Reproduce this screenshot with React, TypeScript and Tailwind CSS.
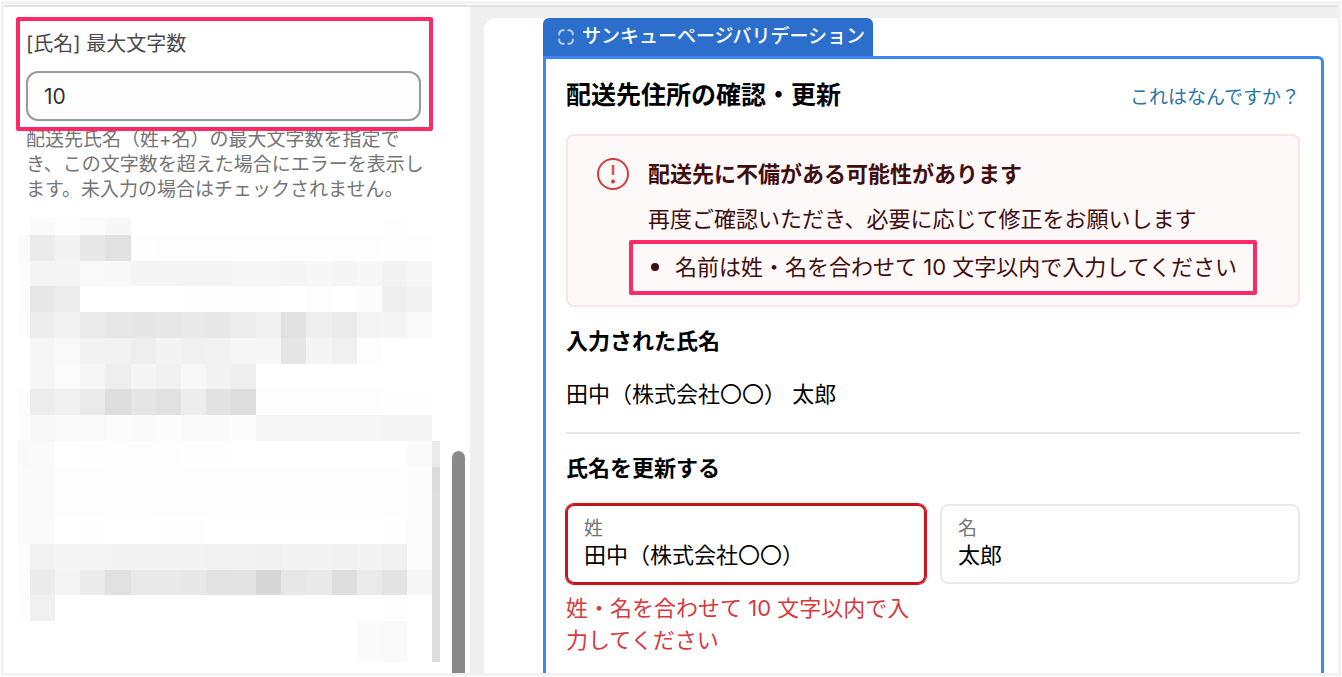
import { useId } from "react";

const MOSAIC: number[][] = [
  [255, 250, 253, 251, 247, 255, 255, 255, 255, 255, 255, 255, 255, 255, 255, 254, 255, 255],
  [251, 235, 243, 232, 225, 254, 253, 253, 253, 253, 253, 253, 253, 253, 253, 254, 254, 255],
  [252, 244, 244, 249, 248, 245, 245, 245, 245, 246, 246, 245, 247, 245, 247, 243, 247, 255],
  [252, 232, 236, 255, 255, 255, 255, 254, 254, 254, 253, 255, 253, 255, 252, 239, 243, 255],
  [253, 237, 242, 234, 231, 230, 231, 233, 232, 236, 240, 225, 238, 234, 244, 245, 249, 255],
  [255, 246, 249, 243, 242, 238, 243, 241, 242, 246, 247, 230, 245, 240, 253, 255, 255, 255],
  [255, 246, 251, 246, 238, 245, 241, 248, 242, 239, 255, 255, 255, 255, 255, 255, 255, 255],
  [253, 237, 241, 234, 221, 230, 225, 237, 226, 221, 253, 253, 253, 253, 253, 254, 254, 255],
  [252, 248, 249, 249, 251, 250, 252, 250, 250, 252, 246, 246, 246, 246, 246, 245, 245, 255],
  [249, 250, 255, 254, 253, 253, 253, 254, 254, 255, 255, 255, 255, 255, 255, 255, 249, 234],
  [250, 250, 254, 253, 253, 253, 253, 253, 253, 253, 253, 253, 253, 253, 253, 253, 252, 219],
  [250, 250, 254, 253, 253, 253, 253, 253, 253, 253, 253, 253, 253, 253, 253, 253, 252, 222],
  [250, 250, 255, 254, 255, 255, 254, 254, 255, 255, 255, 255, 255, 255, 255, 254, 252, 222],
  [253, 242, 245, 244, 243, 243, 243, 243, 242, 243, 240, 243, 243, 241, 243, 240, 252, 222],
  [253, 235, 244, 235, 225, 233, 233, 232, 227, 227, 215, 231, 233, 222, 234, 228, 247, 222],
  [252, 240, 255, 255, 255, 255, 255, 255, 255, 255, 255, 255, 255, 255, 255, 254, 255, 222],
  [255, 255, 255, 255, 255, 255, 255, 255, 255, 255, 255, 255, 255, 255, 250, 249, 255, 222],
];

function Mosaic() {
  return (
    <div
      aria-hidden="true"
      className="mt-4 mr-[30px] ml-3.5 grid h-[444px] grid-cols-[12px_repeat(16,1fr)_8px] grid-rows-[17px_repeat(15,1fr)_41px]"
    >
      {MOSAIC.flatMap((row, y) =>
        row.map((v, x) => (
          <div key={`${y}-${x}`} style={{ backgroundColor: `rgb(${v}, ${v}, ${v})` }} />
        )),
      )}
    </div>
  );
}

function Sidebar() {
  const id = useId();
  return (
    <aside className="relative w-[466px] shrink-0 overflow-hidden bg-white pt-[22px]">
      <div className="relative mr-[49px] ml-[22px]">
        <label htmlFor={id} className="block text-[20px] leading-[30px] text-[#4a4a4a]">
          [氏名] 最大文字数
        </label>
        <input
          id={id}
          type="text"
          defaultValue="10"
          className="mt-3 block h-[50px] w-full rounded-xl border-2 border-[#9a9a9a] bg-[#fdfdfd] px-4 text-[21px] text-[#333]"
        />
        <div className="pointer-events-none absolute -top-3 -right-3 -bottom-2.5 -left-2.5 z-10 rounded-xs border-4 border-[#fe2a68]" />
      </div>
      <p className="mt-1.5 mr-10 ml-[22px] text-[19px] leading-[25px] text-[#757575]">
        配送先氏名（姓+名）の最大文字数を指定で
        <br />
        き、この文字数を超えた場合にエラーを表示し
        <br />
        ます。未入力の場合はチェックされません。
      </p>
      <Mosaic />
      <div className="absolute right-[5px] bottom-0 h-[222px] w-[13px] rounded-t-full bg-[#8a8a8a]" />
    </aside>
  );
}

function Field({ label, value, error }: { label: string; value: string; error?: string }) {
  const id = useId();
  return (
    <div>
      <div
        className={
          error
            ? "h-20 rounded-lg border-2 border-[#cb1219] px-4 pt-[11px] ring-1 ring-[#cb1219]"
            : "h-20 rounded-lg border-2 border-[#e8e8e8] px-4 pt-[11px]"
        }
      >
        <label htmlFor={id} className="block text-[19px] leading-[24px] text-[#757575]">
          {label}
        </label>
        <input
          id={id}
          type="text"
          defaultValue={value}
          aria-invalid={error ? true : undefined}
          className="block h-7 w-full bg-transparent text-[22px] leading-7 text-black outline-none"
        />
      </div>
      {error && <p className="mt-2 text-[22px] leading-[32px] text-[#d63a3e]">{error}</p>}
    </div>
  );
}

function Alert() {
  return (
    <div
      role="alert"
      className="mt-[21px] flex items-start rounded-lg border-2 border-[#fbe5e4] bg-[#fdf9f8] py-[22px] pl-[29px] text-[22px] leading-[32px] text-[#410e10]"
    >
      <svg viewBox="0 0 32 32" className="size-8 shrink-0" aria-hidden="true">
        <circle cx="16" cy="16" r="15" fill="none" stroke="#d43b40" strokeWidth="2" />
        <path d="M16 7v10" stroke="#d8565a" strokeWidth="2.6" />
        <circle cx="16" cy="23.5" r="2" fill="#d43b40" />
      </svg>
      <div className="ml-[19px]">
        <h3 className="font-bold">配送先に不備がある可能性があります</h3>
        <p className="mt-[13px]">再度ご確認いただき、必要に応じて修正をお願いします</p>
        <div className="relative mt-4 w-fit">
          <ul className="pl-[3px]">
            <li className="flex items-center gap-4 before:size-2 before:rounded-full before:bg-[#410e10]">
              名前は姓・名を合わせて 10 文字以内で入力してください
            </li>
          </ul>
          <div className="pointer-events-none absolute -top-[11px] -right-5 -bottom-3 -left-[19px] rounded-xs border-4 border-[#fe2a68]" />
        </div>
      </div>
    </div>
  );
}

export default function App() {
  return (
    <div className="h-screen bg-white p-px font-['Inter','Noto_Sans_CJK_JP',sans-serif]" lang="ja">
      <div className="flex h-full flex-col overflow-hidden border-3 border-[#f2f2f2]">
        <div className="mt-px h-0.5 shrink-0 bg-[#e2e2e2]" />
        <div className="flex min-h-0 flex-1">
          <Sidebar />
          <main className="min-w-0 flex-1 overflow-hidden bg-[#efefef] pt-[11px] pl-3.5">
            <div className="h-full rounded-tl-xl bg-white pr-3.5 pl-[59px]">
              <div className="flex h-[38px] w-fit items-center gap-2 rounded-t-md bg-[#2c6ecb] pr-2 pl-[15px] text-[19px] font-medium text-white">
                <svg
                  viewBox="0 0 16 16"
                  className="size-4"
                  fill="none"
                  stroke="#bdd2f0"
                  strokeWidth="2"
                  strokeLinecap="round"
                  aria-hidden="true"
                >
                  <path d="M1.2 5.6V5A3.8 3.8 0 0 1 5 1.2h.6M10.4 1.2h.6A3.8 3.8 0 0 1 14.8 5v.6M14.8 10.4v.6a3.8 3.8 0 0 1-3.8 3.8h-.6M5.6 14.8H5A3.8 3.8 0 0 1 1.2 11v-.6" />
                </svg>
                サンキューページバリデーション
              </div>
              <section className="h-full rounded-tr-md border-3 border-[#3a86fb] pt-[18px] pr-[21px] pl-5">
                <div className="flex items-baseline justify-between">
                  <h1 className="text-[25px] leading-[36px] font-bold text-black">
                    配送先住所の確認・更新
                  </h1>
                  <a href="#about" className="text-[19px] leading-[28px] text-[#2b76a8]">
                    これはなんですか？
                  </a>
                </div>
                <Alert />
                <h2 className="mt-[18px] text-[22px] leading-[32px] font-bold text-black">
                  入力された氏名
                </h2>
                <p className="mt-[21px] text-[22px] leading-[32px] text-black">
                  田中（株式会社〇〇） 太郎
                </p>
                <hr className="mt-[22px] border-t-2 border-[#e6e6e6]" />
                <h2 className="mt-[18px] text-[22px] leading-[32px] font-bold text-black">
                  氏名を更新する
                </h2>
                <div className="mt-5 grid grid-cols-2 gap-3.5">
                  <Field
                    label="姓"
                    value="田中（株式会社〇〇）"
                    error="姓・名を合わせて 10 文字以内で入力してください"
                  />
                  <Field label="名" value="太郎" />
                </div>
              </section>
            </div>
          </main>
        </div>
      </div>
    </div>
  );
}
